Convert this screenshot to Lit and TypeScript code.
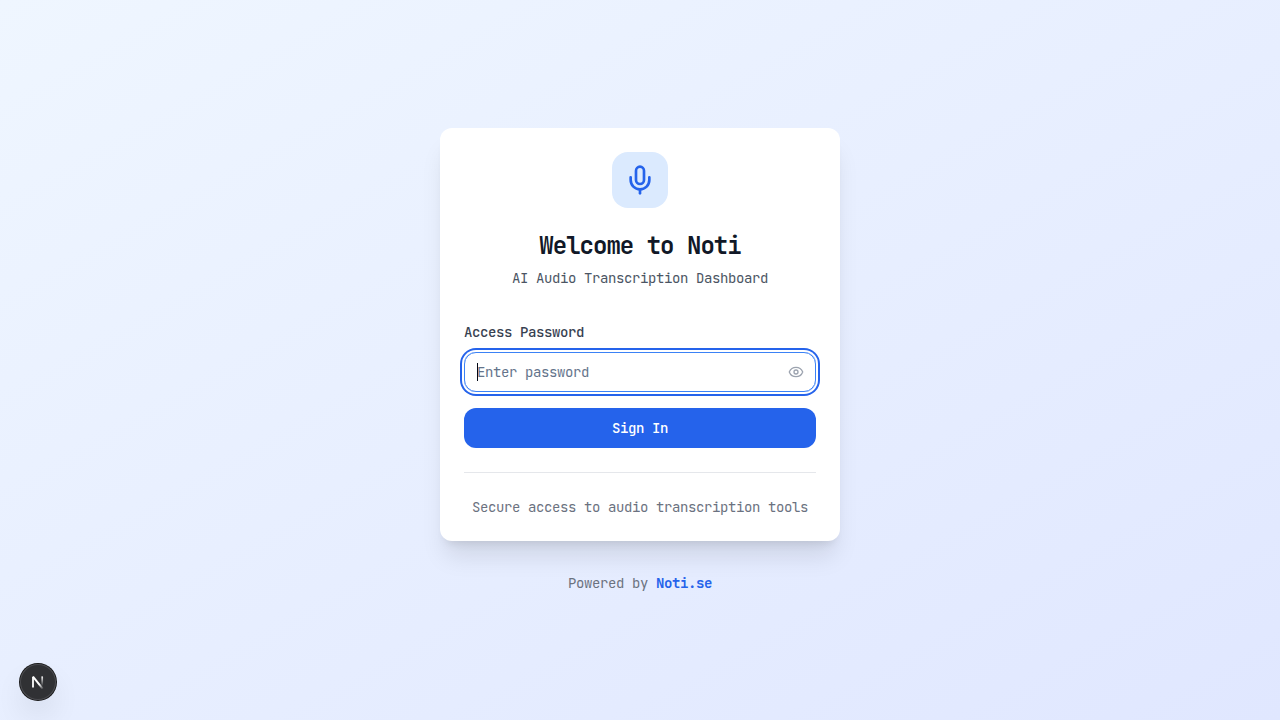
import { LitElement, html, css } from "lit";
import { customElement } from "lit/decorators.js";

@customElement("app-root")
export class AppRoot extends LitElement {
  static styles = css`
    :host {
      display: block;
      height: 100vh;
      box-sizing: border-box;
      overflow: hidden;
      font-family: "JetBrains Mono", "DejaVu Sans Mono", "Liberation Mono", monospace;
      font-size: 14px;
      line-height: 20px;
      letter-spacing: -0.4px;
      color: #6b7280;
      background: linear-gradient(to bottom right, #eff6ff, #e0e7ff);
    }
    .page {
      height: 100%;
      display: flex;
      flex-direction: column;
      align-items: center;
      justify-content: center;
      gap: 32px;
    }
    .card {
      box-sizing: border-box;
      width: 400px;
      padding: 24px;
      border-radius: 12px;
      background: #fff;
      box-shadow: 0 20px 25px -5px rgb(0 0 0 / 0.1), 0 8px 10px -6px rgb(0 0 0 / 0.1);
      display: flex;
      flex-direction: column;
    }
    .logo {
      align-self: center;
      width: 56px;
      height: 56px;
      border-radius: 16px;
      background: #dbeafe;
      color: #2563eb;
      display: grid;
      place-items: center;
    }
    svg {
      display: block;
    }
    h1 {
      margin: 22px 0 0;
      font-size: 24px;
      line-height: 32px;
      letter-spacing: -0.98px;
      font-weight: 700;
      text-align: center;
      color: #111827;
    }
    .subtitle {
      margin: 6px 0 0;
      text-align: center;
      color: #4b5563;
    }
    .label {
      margin-top: 34px;
      color: #374151;
      font-weight: 500;
    }
    .field {
      position: relative;
      box-sizing: border-box;
      height: 40px;
      margin-top: 10px;
      padding: 0 11px 0 12px;
      border: 1px solid #3b82f6;
      border-radius: 12px;
      box-shadow: 0 0 0 2px #fff, 0 0 0 4px #2563eb;
      display: flex;
      align-items: center;
      justify-content: space-between;
    }
    .field input {
      flex: 1;
      min-width: 0;
      padding: 0;
      border: 0;
      outline: 0;
      background: none;
      font: inherit;
      letter-spacing: inherit;
      color: #111827;
    }
    .field input::placeholder {
      color: #64748b;
      opacity: 1;
    }
    .caret {
      position: absolute;
      left: 12px;
      top: 10px;
      width: 1px;
      height: 18px;
      background: #020817;
    }
    .eye {
      color: #9ca3af;
    }
    .submit {
      height: 40px;
      margin-top: 16px;
      padding: 0;
      border: 0;
      border-radius: 12px;
      background: #2563eb;
      color: #fff;
      font: inherit;
      letter-spacing: inherit;
      font-weight: 500;
    }
    .note {
      margin-top: 24px;
      padding-top: 24px;
      border-top: 1px solid #e5e7eb;
      text-align: center;
    }
    .brand {
      color: #2563eb;
      font-weight: 600;
    }
    .badge {
      position: absolute;
      left: 20px;
      top: 664px;
      width: 36px;
      height: 36px;
      border-radius: 50%;
      background: #303134;
      box-shadow: 0 0 0 1px #171717, inset 0 0 0 1px #4b4c50, 0 16px 32px -8px rgb(0 0 0 / 0.24);
      display: grid;
      place-items: center;
    }
  `;

  render() {
    return html`
      <main class="page">
        <section class="card">
          <div class="logo">
            <svg width="32" height="32" viewBox="0 0 24 24" fill="none" stroke="currentColor" stroke-width="2" stroke-linecap="round" stroke-linejoin="round">
              <path d="M12 19v3" />
              <path d="M19 10v2a7 7 0 0 1-14 0v-2" />
              <rect x="9" y="2" width="6" height="13" rx="3" />
            </svg>
          </div>
          <h1>Welcome to Noti</h1>
          <p class="subtitle">AI Audio Transcription Dashboard</p>
          <label class="label">Access Password</label>
          <div class="field">
            <input type="password" placeholder="Enter password" />
            <span class="caret"></span>
            <svg class="eye" width="16" height="16" viewBox="0 0 24 24" fill="none" stroke="currentColor" stroke-width="2" stroke-linecap="round" stroke-linejoin="round">
              <path d="M2.062 12.348a1 1 0 0 1 0-.696 10.75 10.75 0 0 1 19.876 0 1 1 0 0 1 0 .696 10.75 10.75 0 0 1-19.876 0" />
              <circle cx="12" cy="12" r="3" />
            </svg>
          </div>
          <button class="submit">Sign In</button>
          <div class="note">Secure access to audio transcription tools</div>
        </section>
        <div>Powered by <span class="brand">Noti.se</span></div>
      </main>
      <div class="badge">
        <svg width="14" height="14" viewBox="0 0 14 14" fill="none" stroke-width="1.7">
          <defs>
            <linearGradient id="diag" x1="7" y1="7" x2="12.5" y2="14" gradientUnits="userSpaceOnUse">
              <stop offset="0.3" stop-color="#fff" />
              <stop offset="1" stop-color="#fff" stop-opacity="0" />
            </linearGradient>
            <linearGradient id="stem" x1="11" y1="1" x2="11" y2="11" gradientUnits="userSpaceOnUse">
              <stop stop-color="#fff" />
              <stop offset="1" stop-color="#fff" stop-opacity="0" />
            </linearGradient>
          </defs>
          <path d="M2 12.6V1.8" stroke="#fff" stroke-width="1.8" />
          <path d="M2 1.6L11.8 13.8" stroke="url(#diag)" stroke-width="2" />
          <path d="M11.2 1.4V11" stroke="url(#stem)" />
        </svg>
      </div>
    `;
  }
}
